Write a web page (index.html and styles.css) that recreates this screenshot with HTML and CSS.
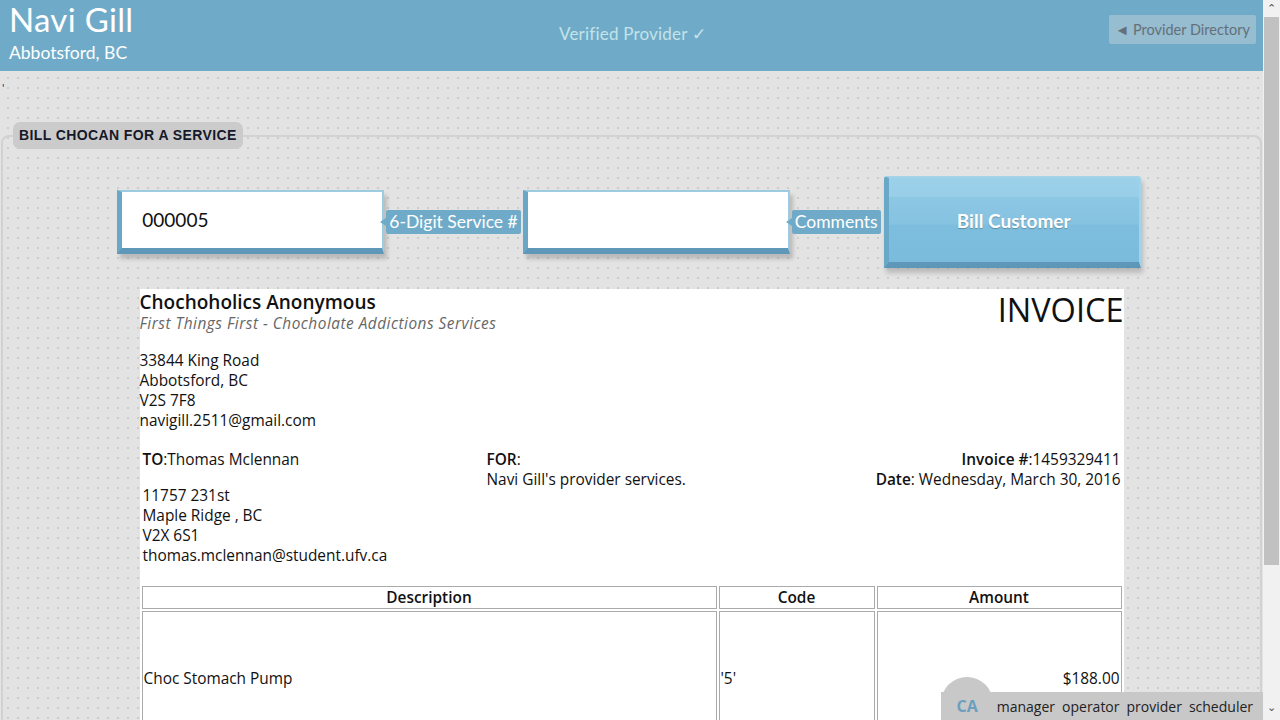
FILE: index.html
```html
<!DOCTYPE html>
<html>
<head>
<meta charset="utf-8">
<title>Bill ChocAn</title>
<link rel="stylesheet" href="styles.css">
</head>
<body>
<header class="topbar">
  <div class="who">
    <div class="who-name">Navi Gill</div>
    <div class="who-city">Abbotsford, BC</div>
  </div>
  <div class="verified">Verified Provider ✓</div>
  <div class="dir-wrap"><a class="dir-btn" href="#">◄ Provider Directory</a></div>
</header>

<main class="page">
  <div class="stray">'</div>
  <fieldset class="panel">
    <legend class="legend">BILL CHOCAN FOR A SERVICE</legend>
    <div class="form-row">
      <div class="field">
        <div class="inbox">000005</div>
        <span class="tag">6-Digit Service #</span>
      </div>
      <div class="field">
        <div class="inbox"></div>
        <span class="tag">Comments</span>
      </div>
      <button class="bill">Bill Customer</button>
    </div>

    <div class="invoice">
      <div class="inv-head">
        <div class="company">
          <div class="co-name">Chochoholics Anonymous</div>
          <div class="co-tag">First Things First - Chocholate Addictions Services</div>
          <div class="co-addr">
            <div>33844 King Road</div>
            <div>Abbotsford, BC</div>
            <div>V2S 7F8</div>
            <div>navigill.2511@gmail.com</div>
          </div>
        </div>
        <div class="inv-title">INVOICE</div>
      </div>

      <div class="parties">
        <div class="to">
          <div><b>TO</b>:Thomas Mclennan</div>
          <div class="to-addr">
            <div>11757 231st</div>
            <div>Maple Ridge , BC</div>
            <div>V2X 6S1</div>
            <div>thomas.mclennan@student.ufv.ca</div>
          </div>
        </div>
        <div class="for">
          <div><b>FOR</b>:</div>
          <div>Navi Gill's provider services.</div>
        </div>
        <div class="meta">
          <div><b>Invoice #</b>:1459329411</div>
          <div><b>Date</b>: Wednesday, March 30, 2016</div>
        </div>
      </div>

      <table class="items">
        <thead>
          <tr><th class="c-desc">Description</th><th class="c-code">Code</th><th class="c-amt">Amount</th></tr>
        </thead>
        <tbody>
          <tr class="item"><td>Choc Stomach Pump</td><td>'5'</td><td class="amt">$188.00</td></tr>
          <tr class="total"><td></td><td><b>Total</b></td><td class="amt">$188.00</td></tr>
        </tbody>
      </table>
    </div>
  </fieldset>
</main>

<div class="rolebar">
  <span class="ca">CA</span>
  <span class="role">manager</span>
  <span class="role">operator</span>
  <span class="role">provider</span>
  <span class="role">scheduler</span>
</div>

<div class="scrollbar">
  <div class="sb-arrow">&#8963;</div>
  <div class="sb-track"><div class="sb-thumb"></div></div>
  <div class="sb-arrow sb-down">&#8964;</div>
</div>
</body>
</html>
```
FILE: styles.css
```css
html, body {
  margin: 0;
  padding: 0;
}
html {
  overflow: hidden;
}
body {
  margin-right: 17px;
  font-family: Lato, "Open Sans", sans-serif;
  background-color: #e3e3e3;
  background-image: radial-gradient(circle, #cdcdcd 1px, transparent 1.5px);
  background-size: 10px 10px;
  background-position: 3px 3px;
  color: #222;
}

.topbar {
  display: grid;
  grid-template-columns: 1fr auto 1fr;
  align-items: start;
  height: 71px;
  background: #6fabc9;
  padding: 0 7px 0 9px;
  box-sizing: border-box;
}
.who-name {
  font-size: 33px;
  line-height: 38px;
  color: #fff;
  letter-spacing: 0.3px;
}
.who-city {
  font-size: 17.5px;
  line-height: 26px;
  color: #fff;
  margin-top: 2px;
}
.verified {
  font-size: 17px;
  color: #c3e3e8;
  margin-top: 23px;
  letter-spacing: 0.2px;
}
.dir-wrap {
  display: flex;
  justify-content: flex-end;
}
.dir-btn {
  margin-top: 15px;
  height: 29px;
  line-height: 29px;
  padding: 0 6px;
  border-radius: 2px;
  background: #96bdd0;
  color: #647079;
  font-size: 14.5px;
  text-decoration: none;
}

.page {
  padding: 11px 1px 40px;
}
.stray {
  height: 0;
  font-size: 12px;
  line-height: 12px;
  color: #1b3a8a;
  padding-left: 1px;
}

.panel {
  margin: 40px 0 0;
  padding: 0 0 140px;
  border: 2px solid #d2d2d2;
  border-radius: 8px;
  min-width: 0;
}
.legend {
  margin-left: 10px;
  padding: 0 6px;
  height: 27px;
  line-height: 27px;
  background: #cbcbcb;
  border-radius: 7px;
  font-family: "Liberation Sans", Arial, sans-serif;
  font-weight: bold;
  font-size: 14px;
  letter-spacing: 0.4px;
  color: #15192a;
}

.form-row {
  display: flex;
  align-items: center;
  justify-content: center;
  margin-top: 27px;
  padding-right: 5px;
}
.field {
  display: flex;
  align-items: center;
}
.inbox {
  width: 240px;
  height: 56px;
  background: #fff;
  border-top: 2px solid #9dcce2;
  border-right: 2px solid #9dcce2;
  border-left: 5px solid #6aa7c7;
  border-bottom: 6px solid #5f97b8;
  box-shadow: 3px 5px 4px rgba(0, 0, 0, 0.18);
  font-size: 19px;
  line-height: 56px;
  padding-left: 20px;
  color: #111;
}
.tag {
  position: relative;
  margin: 0 2px 0 2px;
  background: #6fabc9;
  color: #fff;
  font-size: 17.5px;
  height: 24px;
  line-height: 24px;
  padding: 0 3px;
  border-radius: 2px;
  white-space: nowrap;
}
.tag::before {
  content: "";
  position: absolute;
  left: -6px;
  top: 8px;
  border-top: 4px solid transparent;
  border-bottom: 4px solid transparent;
  border-right: 6px solid #6fabc9;
}
.bill {
  width: 257px;
  height: 92px;
  margin-left: 1px;
  border: 0;
  border-top: 2px solid #a4d3e8;
  border-right: 2px solid #a4d3e8;
  border-left: 5px solid #6aa8c8;
  border-bottom: 6px solid #5f97b8;
  border-radius: 3px 3px 0 0;
  background: linear-gradient(#9dd1ea 0%, #98cee8 22%, #8cc7e4 23%, #86c3e1 55%, #7dbddd 56%, #7bbbdc 100%);
  box-shadow: 2px 5px 5px rgba(0, 0, 0, 0.18);
  color: #fff;
  font-family: Lato, sans-serif;
  font-weight: bold;
  font-size: 19px;
  text-shadow: 0 1px 1px rgba(0, 0, 0, 0.25);
  box-sizing: border-box;
  padding: 0;
}

.invoice {
  width: 984px;
  margin: 21px auto 0;
  background: #fff;
  font-family: "Open Sans", sans-serif;
  font-size: 15.4px;
  line-height: 20px;
  color: #111;
  padding-bottom: 40px;
}
.inv-head {
  display: flex;
  justify-content: space-between;
  padding-top: 2px;
}
.co-name {
  font-size: 19px;
  font-weight: 600;
  line-height: 22px;
}
.co-tag {
  font-style: italic;
  color: #666;
  line-height: 22px;
  letter-spacing: 0.5px;
}
.co-addr {
  margin-top: 16px;
}
.inv-title {
  font-size: 32.5px;
  line-height: 36px;
  padding-top: 1px;
  color: #111;
}
.parties {
  display: grid;
  grid-template-columns: 344px 1fr auto;
  margin-top: 19px;
  padding: 0 3px;
}
.parties b {
  font-weight: 600;
}
.to-addr {
  margin-top: 16px;
}
.meta {
  text-align: right;
}

.items {
  width: 984px;
  margin-top: 18px;
  border-spacing: 2px;
  font-size: 15.4px;
}
.items th, .items td {
  border: 1px solid #aaa;
  padding: 0 1px;
}
.items th {
  font-weight: 600;
  height: 21px;
  line-height: 20px;
}
.c-desc { width: 571px; }
.c-code { width: 152px; }
.item td {
  height: 134px;
  vertical-align: middle;
}
.total td {
  height: 24px;
}
.amt {
  text-align: right;
}

.rolebar {
  position: fixed;
  right: 17px;
  bottom: 0;
  display: flex;
  align-items: center;
  gap: 7px;
  height: 28px;
  padding: 0 10px 0 16px;
  background: #c8c8c8;
  font-family: "Open Sans", sans-serif;
  font-size: 14px;
  color: #222;
}
.rolebar::before {
  content: "";
  position: absolute;
  left: 0;
  top: -15px;
  width: 52px;
  height: 52px;
  border-radius: 50%;
  background: #c8c8c8;
}
.ca {
  position: relative;
  font-weight: bold;
  color: #6b9fbf;
  font-size: 16px;
  margin-right: 12px;
}
.role {
  position: relative;
}

.scrollbar {
  position: fixed;
  top: 0;
  right: 0;
  width: 17px;
  height: 100%;
  background: #f1f1f1;
  display: flex;
  flex-direction: column;
}
.sb-arrow {
  height: 17px;
  line-height: 17px;
  text-align: center;
  font-family: "DejaVu Sans", sans-serif;
  font-size: 11px;
  color: #505050;
}
.sb-down {
  line-height: 10px;
}
.sb-track {
  flex: 1;
  padding: 0 1px;
}
.sb-thumb {
  height: 548px;
  background: #c1c1c1;
}
```
